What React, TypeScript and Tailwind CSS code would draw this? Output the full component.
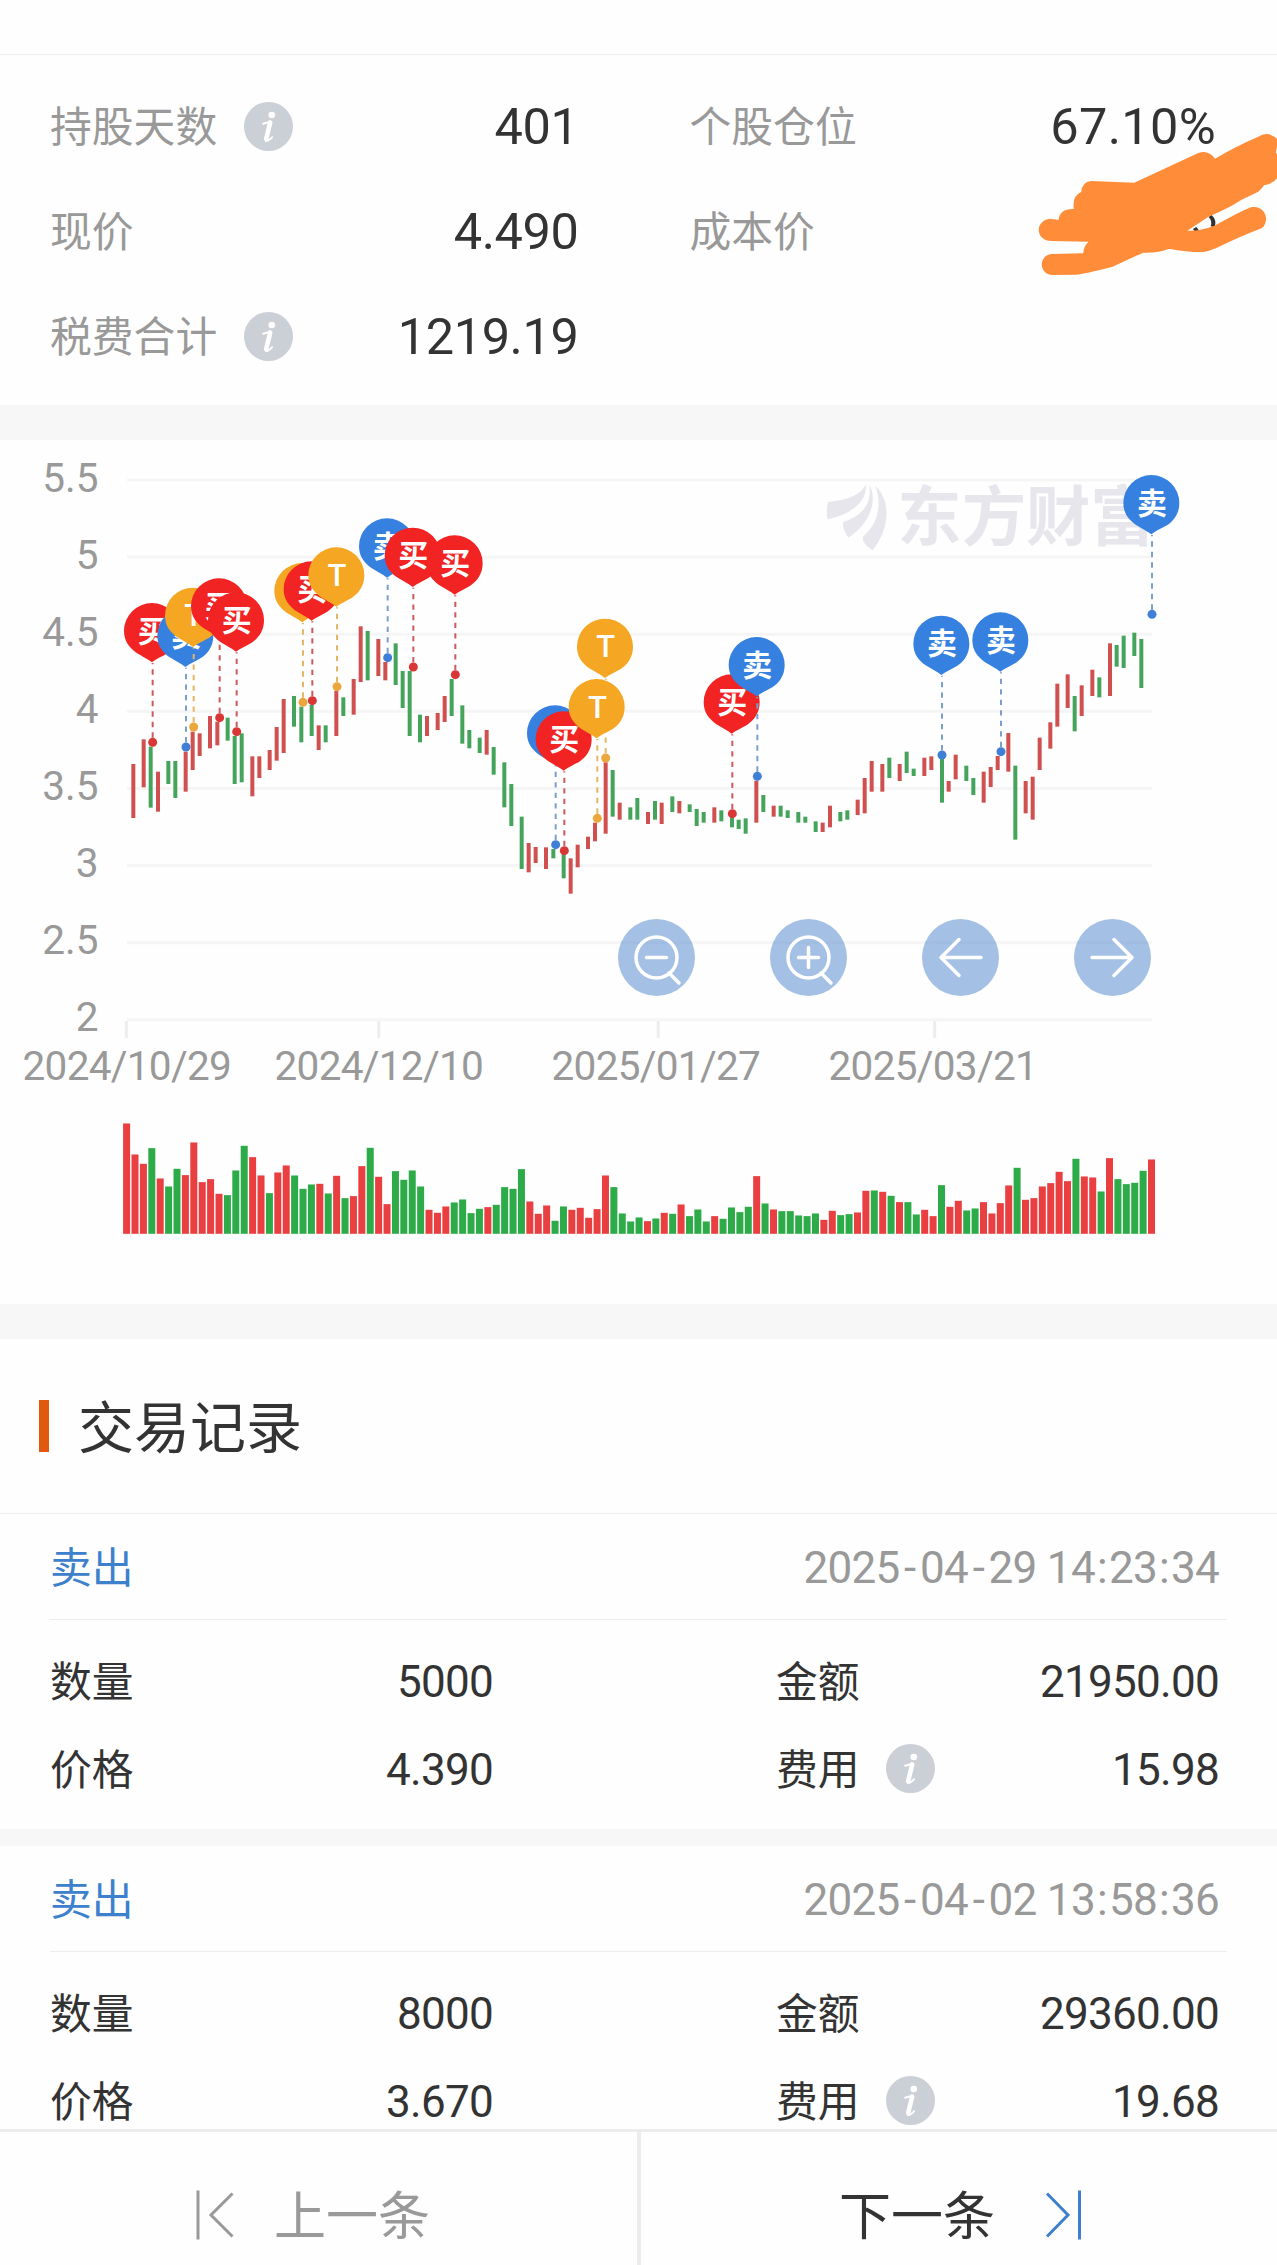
import React from "react";

/* ---------- shared pieces ---------- */

// Digits in the condensed numeric face; dashes and colons get extra side room.
function Num({ children, className = "" }: { children: string; className?: string }) {
  return (
    <span className={`whitespace-nowrap font-['Roboto',sans-serif] ${className}`}>
      {children.split(/([-:])/).map((part, i) =>
        part === "-" ? (
          <span key={i} className="px-[4.500px]">-</span>
        ) : part === ":" ? (
          <span key={i} className="px-[2px]">:</span>
        ) : (
          part
        ),
      )}
    </span>
  );
}

function InfoIcon() {
  return (
    <svg viewBox="0 0 49 49" className="h-[49px] w-[49px] shrink-0">
      <circle cx="24.5" cy="24.5" r="24.5" fill="#cbcfd6" />
      <circle cx="27.8" cy="13" r="3.3" fill="#fff" />
      <path d="M19.2 21.8 L25.6 19.9" stroke="#fff" strokeWidth="2" strokeLinecap="round" />
      <path d="M26.2 20.4 L22.2 37" stroke="#fff" strokeWidth="4.6" strokeLinecap="round" />
      <path d="M21.8 39 Q24.6 39.4 28.2 35.2" stroke="#fff" strokeWidth="1.8" fill="none" strokeLinecap="round" />
    </svg>
  );
}

/* ---------- position summary ---------- */

function Stat({ label, value, info, right }: { label: string; value?: string; info?: boolean; right?: boolean }) {
  return (
    <div className={`flex h-[105px] items-center justify-between ${right ? "pr-[61px] pl-[51px]" : "pr-[60px] pl-[50px]"}`}>
      <span className="flex items-center gap-[27px] text-[41.8px] text-[#999]">
        <span className="mb-[3px]">{label}</span>
        {info && <InfoIcon />}
      </span>
      {value && (
        <Num className={`mt-[2px] text-[50.5px] text-[#333] ${right ? "tracking-[0.3px]" : "tracking-[-0.4px]"}`}>
          {value}
        </Num>
      )}
    </div>
  );
}

function Scribble() {
  return (
    <svg
      viewBox="960 390 608 450"
      preserveAspectRatio="none"
      className="absolute top-[75px] right-0 h-[150px] w-[248px]"
    >
      <path d="M1404 648 Q1416 662 1410 680 M1366 684 L1374 696" stroke="#333" strokeWidth="10" fill="none" />
      <path d="M1290 742 L1322 742" stroke="#333" strokeWidth="9" />
      <path
        fill="#ff8c38"
        d="M1012 656 C974 660 974 723 1016 723 L1106 725 Q1094 738 1093 760 L1015 762 C983 766 983 824 1018 825 L1075 824 Q1095 822 1165 800 Q1200 780 1240 758 Q1280 759 1303 746 Q1350 757 1388 756 Q1400 754 1418 745 Q1480 708 1530 685 C1552 664 1540 616 1507 621 Q1492 625 1415 677 Q1378 694 1348 692 L1400 650 Q1450 625 1480 600 L1522 575 Q1532 566 1536 556 Q1560 550 1568 535 L1568 462 L1565 458 L1568 440 L1568 416 Q1545 392 1522 410 Q1470 437 1416 476 Q1400 448 1375 459 L1218 548 L1112 543 Q1090 546 1088 576 Q1065 588 1070 627 Q1036 625 1032 660 Z"
      />
    </svg>
  );
}

/* ---------- chart ---------- */

// Chart data is kept at three units per CSS pixel: [x, top, bottom, rising ? 1 : 0]
const CANDLES: [number, number, number, number][] = [
  [400, 972, 1134, 1], [431, 898, 1042, 1], [452, 920, 1103, 0], [474, 995, 1115, 1], [505, 963, 1032, 0],
  [526, 963, 1074, 0], [557, 935, 1055, 1], [578, 875, 990, 1], [599, 880, 948, 1], [630, 828, 925, 1],
  [652, 845, 916, 1], [683, 833, 902, 0], [704, 888, 1032, 0], [725, 880, 1027, 0], [757, 949, 1069, 1],
  [778, 949, 1014, 1], [809, 930, 990, 1], [830, 861, 962, 1], [851, 777, 939, 1], [882, 768, 860, 0],
  [904, 800, 907, 0], [935, 795, 888, 0], [956, 856, 930, 1], [977, 856, 907, 0], [1009, 752, 888, 1],
  [1030, 772, 828, 0], [1061, 717, 824, 1], [1082, 559, 726, 1], [1103, 573, 721, 0], [1135, 597, 708, 1],
  [1156, 666, 721, 1], [1187, 610, 735, 0], [1208, 693, 804, 0], [1229, 693, 888, 0], [1260, 824, 907, 0],
  [1281, 828, 888, 1], [1313, 819, 870, 1], [1334, 768, 846, 1], [1355, 717, 828, 0], [1387, 796, 911, 0],
  [1408, 870, 925, 0], [1439, 893, 939, 0], [1460, 870, 944, 1], [1481, 921, 1004, 0], [1513, 967, 1102, 0],
  [1534, 1032, 1158, 0], [1565, 1130, 1287, 0], [1586, 1209, 1297, 1], [1607, 1221, 1269, 1], [1638, 1222, 1287, 1],
  [1660, 1227, 1255, 0], [1691, 1240, 1315, 0], [1712, 1255, 1361, 1], [1733, 1214, 1282, 1], [1764, 1190, 1227, 1],
  [1785, 1148, 1204, 1], [1817, 967, 1181, 1], [1838, 990, 1130, 0], [1859, 1088, 1139, 1], [1891, 1102, 1139, 0],
  [1912, 1074, 1139, 0], [1944, 1116, 1152, 1], [1965, 1083, 1139, 0], [1985, 1088, 1152, 1], [2017, 1069, 1116, 0],
  [2038, 1083, 1120, 1], [2069, 1093, 1116, 0], [2090, 1107, 1158, 0], [2111, 1116, 1148, 0], [2143, 1102, 1148, 1],
  [2164, 1111, 1144, 0], [2196, 1130, 1162, 0], [2216, 1139, 1167, 0], [2237, 1135, 1181, 0], [2269, 1022, 1148, 1],
  [2290, 1065, 1116, 0], [2321, 1097, 1130, 1], [2342, 1097, 1130, 0], [2363, 1111, 1134, 0], [2395, 1116, 1148, 0],
  [2416, 1130, 1148, 0], [2447, 1144, 1176, 0], [2468, 1148, 1176, 1], [2490, 1097, 1162, 1], [2521, 1116, 1144, 0],
  [2542, 1111, 1139, 0], [2573, 1079, 1125, 1], [2594, 1014, 1120, 1], [2615, 963, 1055, 1], [2647, 972, 1055, 1],
  [2668, 953, 1014, 0], [2699, 972, 1023, 1], [2720, 935, 999, 0], [2741, 986, 1008, 0], [2773, 953, 1008, 1],
  [2794, 949, 990, 1], [2826, 950, 1088, 0], [2846, 1023, 1055, 1], [2867, 944, 1018, 1], [2899, 977, 1023, 0],
  [2920, 1014, 1065, 0], [2951, 995, 1088, 1], [2972, 981, 1041, 1], [2993, 948, 990, 1], [3025, 879, 995, 1],
  [3046, 977, 1199, 0], [3077, 1023, 1120, 1], [3098, 1010, 1139, 1], [3119, 893, 990, 1], [3151, 847, 926, 1],
  [3172, 731, 860, 1], [3203, 703, 804, 1], [3224, 768, 874, 0], [3245, 736, 828, 1], [3277, 689, 768, 1],
  [3298, 712, 772, 0], [3330, 610, 768, 1], [3350, 615, 680, 0], [3371, 587, 684, 0], [3403, 578, 648, 0],
  [3424, 597, 744, 0],
];

// Daily volume: r = up day, g = down day, followed by the bar height.
const VOLUME =
  "r331 r238 r210 g257 r166 g142 g195 r176 r274 r155 r164 r120 g116 g190 g264 r230 r175 g122 r184 r205 g175 g135 g148 r150 g121 r174 g107 r113 r203 g258 r171 r89 g188 g162 g190 g142 r72 r63 r82 g94 g103 g62 g75 r80 g87 g140 g135 g194 r97 r60 r85 g39 g82 r72 r78 r48 r74 r175 g140 g61 g37 g49 r38 g46 r63 g60 r88 g53 g73 g37 r53 g45 g79 g65 g81 r173 g91 r73 g68 g68 g55 g53 g61 r42 r69 g56 g59 r64 r129 g130 r126 g114 r95 g95 g58 r72 r53 g146 r81 r99 g70 g76 r95 r61 r92 r145 g198 r102 r107 r142 r152 r186 r158 g225 r172 r169 g127 r227 g164 g149 g153 g189 r223".split(
    " ",
  );

type Kind = "buy" | "sell" | "t";
const PINS: [Kind, number, number][] = [
  ["buy", 456, 489], ["sell", 556, 503], ["t", 579, 443], ["buy", 657, 415], ["buy", 708, 457],
  ["t", 907, 369], ["buy", 935, 364], ["t", 1009, 322], ["sell", 1161, 235], ["buy", 1364, 286],
  ["buy", 1238, 263], ["sell", 1665, 796], ["buy", 1691, 814], ["t", 1815, 536], ["t", 1790, 717],
  ["buy", 2195, 703], ["sell", 2270, 591], ["sell", 2824, 527], ["sell", 3001, 517], ["sell", 3454, 105],
];
const KIND = {
  buy: { fill: "#f22323", dot: "#d93636", line: "#cc5a5a", text: "买" },
  sell: { fill: "#3681e0", dot: "#3f80d6", line: "#7a9fcd", text: "卖" },
  t: { fill: "#f5a623", dot: "#eaa83c", line: "#e5b666", text: "T" },
};

function Pin({ kind, x, top }: { kind: Kind; x: number; top: number }) {
  const k = KIND[kind];
  return (
    <g transform={`translate(${x} ${top})`}>
      <path d="M2 404 V180" stroke={k.line} strokeWidth="6" strokeDasharray="16 15.5" />
      <circle cx="2" cy="418" r="13.5" fill={k.dot} />
      <path
        d="M-84 84 A84 84 0 0 1 84 84 C84 116 67 138 47 151 C28 162 12 168 0 178 C-12 168 -30 160 -47 149 C-68 134 -84 114 -84 84 Z"
        fill={k.fill}
      />
      <text
        x="2"
        y={kind === "t" ? 116 : 116}
        textAnchor="middle"
        fill="#fff"
        className={
          kind === "t"
            ? "font-['Roboto',sans-serif] text-[93px] font-medium"
            : "font-['Noto_Sans_CJK_SC',sans-serif] text-[90px] font-bold"
        }
      >
        {k.text}
      </text>
    </g>
  );
}

const LEVELS = ["5.5", "5", "4.5", "4", "3.5", "3", "2.5", "2"];
// [label, tick x, label centre x]
const DATES: [string, number, number][] = [
  ["2024/10/29", 126.3, 126.8],
  ["2024/12/10", 378.8, 378.8],
  ["2025/01/27", 658.2, 655.8],
  ["2025/03/21", 934.7, 932.8],
];

function Chart() {
  return (
    <svg viewBox="0 0 1277 864" className="block h-[864px] w-[1277px]">
      {LEVELS.map((l, i) => (
        <g key={l}>
          <path d={`M127 ${40 + i * 77.12} H1152`} stroke="#f5f5f6" strokeWidth="3" />
          <text
            x="98.5"
            y={51.6 + i * 77.12}
            textAnchor="end"
            fill="#999"
            className="font-['Roboto',sans-serif] text-[40.5px]"
          >
            {l}
          </text>
        </g>
      ))}
      {DATES.map(([d, x, cx]) => (
        <g key={d}>
          <path d={`M${x} 581 V598`} stroke="#ededed" strokeWidth="3" />
          <text
            x={cx}
            y="639.6"
            textAnchor="middle"
            fill="#999"
            className="font-['Roboto',sans-serif] text-[40.5px] tracking-[-0.7px]"
          >
            {d}
          </text>
        </g>
      ))}
      <g transform="scale(0.333333)">
        <g fill="#e7e6ed">
          <path d="M2484 186 C2540 181 2585 165 2597 133 C2603 180 2560 222 2482 238 Q2478 210 2484 186Z" />
          <path d="M2608 133 C2637 190 2602 256 2545 293 Q2524 262 2530 246 C2590 225 2616 190 2608 133Z" />
          <path d="M2626 137 C2672 180 2672 262 2618 331 Q2584 310 2589 290 C2636 250 2646 190 2626 137Z" />
          <text x="2692" y="301" className="font-['Noto_Sans_CJK_SC',sans-serif] text-[193px] font-bold">
            东方财富
          </text>
        </g>
        {CANDLES.map(([x, t, b, up]) => (
          <rect key={x} x={x - 6} y={t} width="12" height={b - t} fill={up ? "#d05050" : "#45a45c"} />
        ))}
        {PINS.map(([kind, x, top]) => (
          <Pin key={x} kind={kind} x={x} top={top} />
        ))}
      </g>
      {VOLUME.map((v, i) => {
        const h = Number(v.slice(1)) / 3;
        return (
          <rect
            key={i}
            x={123.1 + i * 8.401}
            y={793.8 - h}
            width="7"
            height={h}
            fill={v[0] === "r" ? "#e93f40" : "#2dab48"}
          />
        );
      })}
    </svg>
  );
}

const CONTROLS = [
  { label: "缩小", d: "M28.5 38.5 H48.5 M51 54 L61 64", lens: true },
  { label: "放大", d: "M28.5 38.5 H48.5 M38.5 28.5 V48.5 M51 54 L61 64", lens: true },
  { label: "向左", d: "M59 38.5 H19 M37 20.5 L19 38.5 L37 56.5", lens: false },
  { label: "向右", d: "M18 38.5 H58 M40 20.5 L58 38.5 L40 56.5", lens: false },
];

function ChartControls() {
  return (
    <div className="absolute top-[479px] left-[618px] flex gap-[75px]">
      {CONTROLS.map((c) => (
        <button key={c.label} aria-label={c.label} className="h-[77px] w-[77px] rounded-full bg-[rgb(63,123,200)]/47">
          <svg viewBox="0 0 77 77" fill="none" stroke="#fff" strokeWidth="3.5" strokeLinecap="round" strokeLinejoin="round">
            {c.lens && <circle cx="38.5" cy="38.5" r="20.5" />}
            <path d={c.d} />
          </svg>
        </button>
      ))}
    </div>
  );
}

/* ---------- trade records ---------- */

function Field({ label, value, info }: { label: string; value: string; info?: boolean }) {
  return (
    <div className="flex items-center justify-between">
      <span className="flex items-center gap-[26px] text-[41.8px]">
        <span className="mb-px">{label}</span>
        {info && <InfoIcon />}
      </span>
      <Num className="mt-[3px] text-[44px] tracking-[-0.7px]">{value}</Num>
    </div>
  );
}

type Trade = { time: string; qty: string; amount: string; price: string; fee: string };
const TRADES: Trade[] = [
  { time: "2025-04-29 14:23:34", qty: "5000", amount: "21950.00", price: "4.390", fee: "15.98" },
  { time: "2025-04-02 13:58:36", qty: "8000", amount: "29360.00", price: "3.670", fee: "19.68" },
];

function Record({ trade }: { trade: Trade }) {
  return (
    <article className="h-[332px] shrink-0 border-b-[17px] border-[#f7f7f7] px-[50px] text-[#333]">
      <header className="flex h-[106px] items-center justify-between border-b-[1.5px] border-[#ededed] pr-[8px]">
        <span className="mb-px text-[41.8px] text-[#3d80cc]">卖出</span>
        <Num className="mt-[2px] text-[44px] tracking-[-0.7px] text-[#999]">{trade.time}</Num>
      </header>
      <div className="grid grid-cols-[443px_443px] grid-rows-[88px_88px] justify-between pt-[16px] pr-[8px]">
        <Field label="数量" value={trade.qty} />
        <Field label="金额" value={trade.amount} />
        <Field label="价格" value={trade.price} />
        <Field label="费用" value={trade.fee} info />
      </div>
    </article>
  );
}

/* ---------- page ---------- */

export default function App() {
  return (
    <div className="flex h-[2265px] w-[1277px] flex-col overflow-hidden bg-[#fefefe] font-['Noto_Sans_CJK_SC',sans-serif] leading-none">
      <main className="flex min-h-0 flex-1 flex-col overflow-hidden">
        <div className="h-[55px] shrink-0 border-b-[1.5px] border-[#ededed]" />
        <section className="relative grid h-[350px] shrink-0 grid-cols-2 content-start pt-[19px]">
          <Stat label="持股天数" value="401" info />
          <Stat label="个股仓位" value="67.10%" right />
          <Stat label="现价" value="4.490" />
          <Stat label="成本价" right />
          <Stat label="税费合计" value="1219.19" info />
          <Scribble />
        </section>
        <div className="h-[35px] shrink-0 bg-[#f7f7f7]" />

        <section className="relative h-[864px] shrink-0">
          <Chart />
          <ChartControls />
        </section>
        <div className="h-[35px] shrink-0 bg-[#f7f7f7]" />

        <div className="flex h-[175px] shrink-0 items-center gap-[29px] border-b-[1.5px] border-[#ededed] pl-[39px]">
          <span className="h-[52px] w-[10px] bg-[#e2580f]" />
          <h2 className="mb-[5px] text-[56px] text-[#333]">交易记录</h2>
        </div>
        {TRADES.map((t) => (
          <Record key={t.time} trade={t} />
        ))}
      </main>

      <footer className="flex h-[136px] shrink-0 border-t-[3px] border-[#ececec] bg-[#fefefe] text-[52px]">
        <button className="flex w-[637px] items-center gap-[38px] pt-[33px] pl-[196px] text-[#999]">
          <svg viewBox="0 0 40 50" className="h-[50px] w-[40px]" fill="none" stroke="currentColor" strokeWidth="3">
            <path d="M2 0.500 V49.500 M36.500 3.500 L15 25 L36.500 46.500" />
          </svg>
          <span className="mb-[4px]">上一条</span>
        </button>
        <span className="w-[4px] bg-[#ececec]" />
        <button className="flex flex-1 items-center gap-[48px] pt-[33px] pl-[198px] text-[#333]">
          <span className="mb-[4px]">下一条</span>
          <svg viewBox="0 0 40 50" className="h-[50px] w-[40px] text-[#3f80cc]" fill="none" stroke="currentColor" strokeWidth="3">
            <path d="M36.500 0.500 V49.500 M4 3.500 L25 25 L4 46.500" />
          </svg>
        </button>
      </footer>
    </div>
  );
}
